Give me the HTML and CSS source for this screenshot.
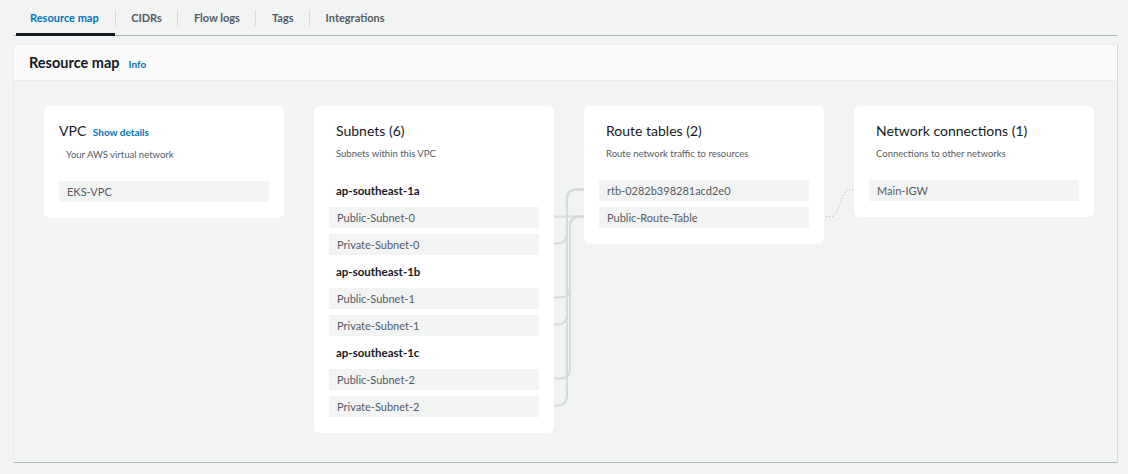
FILE: index.html
```html
<!DOCTYPE html>
<html lang="en">
<head>
<meta charset="utf-8">
<title>Resource map</title>
<link rel="stylesheet" href="styles.css">
</head>
<body>
<div class="page">
  <nav class="tabs">
    <a class="tab active">Resource map</a>
    <span class="sep"></span>
    <a class="tab">CIDRs</a>
    <span class="sep"></span>
    <a class="tab">Flow logs</a>
    <span class="sep"></span>
    <a class="tab">Tags</a>
    <span class="sep"></span>
    <a class="tab">Integrations</a>
  </nav>

  <section class="container">
    <header class="container-head">
      <h2 class="container-title">Resource map</h2>
      <a class="info">Info</a>
    </header>
    <div class="map">
      <svg class="links" width="1101" height="380" aria-hidden="true">
        <g transform="translate(-15,-82)" fill="none">
          <g stroke="#d5dbdb" stroke-width="2">
            <path d="M539 244.5 H558 Q568 244.5 568 234.5 V200.5 Q568 190.5 578 190.5 H599"/>
            <path d="M539 325.5 H558 Q568 325.5 568 315.5 V200.5 Q568 190.5 578 190.5 H599"/>
            <path d="M539 406.5 H558 Q568 406.5 568 396.5 V200.5 Q568 190.5 578 190.5 H599"/>
            <path d="M539 217.5 H599"/>
            <path d="M539 298.5 H561 Q571 298.5 571 288.5 V227.5 Q571 217.5 581 217.5 H599"/>
            <path d="M539 379.5 H561 Q571 379.5 571 369.5 V227.5 Q571 217.5 581 217.5 H599"/>
          </g>
          <path d="M809 217.5 H832 C842 217.5 840 190.5 852 190.5 H869" stroke="#aab7b8" stroke-width="1" stroke-dasharray="1 2"/>
        </g>
      </svg>

      <div class="card">
        <div class="card-head">
          <div class="card-title flush">VPC <a class="link">Show details</a></div>
          <div class="card-sub">Your AWS virtual network</div>
        </div>
        <div class="rows">
          <div class="row">EKS-VPC</div>
        </div>
      </div>

      <div class="card">
        <div class="card-head">
          <div class="card-title">Subnets (6)</div>
          <div class="card-sub">Subnets within this VPC</div>
        </div>
        <div class="rows">
          <div class="zone">ap-southeast-1a</div>
          <div class="row">Public-Subnet-0</div>
          <div class="row">Private-Subnet-0</div>
          <div class="zone">ap-southeast-1b</div>
          <div class="row">Public-Subnet-1</div>
          <div class="row">Private-Subnet-1</div>
          <div class="zone">ap-southeast-1c</div>
          <div class="row">Public-Subnet-2</div>
          <div class="row">Private-Subnet-2</div>
        </div>
      </div>

      <div class="card">
        <div class="card-head">
          <div class="card-title">Route tables (2)</div>
          <div class="card-sub">Route network traffic to resources</div>
        </div>
        <div class="rows">
          <div class="row">rtb-0282b398281acd2e0</div>
          <div class="row">Public-Route-Table</div>
        </div>
      </div>

      <div class="card">
        <div class="card-head">
          <div class="card-title">Network connections (1)</div>
          <div class="card-sub">Connections to other networks</div>
        </div>
        <div class="rows">
          <div class="row">Main-IGW</div>
        </div>
      </div>
    </div>
  </section>
</div>
</body>
</html>
```

FILE: styles.css
```css
* { box-sizing: border-box; }

html, body {
  margin: 0;
  padding: 0;
  background: #f2f3f3;
  font-family: Lato, "Open Sans", "Liberation Sans", sans-serif;
  color: #16191f;
}

.page {
  padding: 0 11px 0 14px;
}

/* Tabs */
.tabs {
  display: flex;
  align-items: center;
  height: 36px;
  padding-left: 2px;
  border-bottom: 1px solid #aab7b8;
}

.tab {
  display: flex;
  align-items: center;
  height: 36px;
  padding: 2px 15.5px 0;
  margin-bottom: -1px;
  font-size: 11px;
  font-weight: 700;
  color: #545b64;
  border-bottom: 3px solid transparent;
  cursor: pointer;
}

.tab.active {
  padding-left: 14px;
  padding-right: 16px;
  color: #0073bb;
  border-bottom-color: #16191f;
}

.sep {
  width: 1px;
  height: 16px;
  background: #d5dbdb;
  flex: none;
}

/* Container */
.container {
  margin-top: 8px;
  background: #f2f3f3;
  border-top: 1px solid #eaeded;
  border-bottom: 1px solid #aab7b8;
  box-shadow: 1px 0 0 0 #d5dbdb, -1px 0 0 0 #eaeded;
}

.container-head {
  display: flex;
  align-items: baseline;
  gap: 9px;
  height: 36px;
  padding: 9px 15px 0;
  background: #fafafa;
  border-bottom: 1px solid #eaeded;
}

.container-title {
  margin: 0;
  font-size: 14.5px;
  font-weight: 700;
  line-height: 18px;
  color: #16191f;
}

.info {
  font-size: 10px;
  font-weight: 700;
  color: #0073bb;
}

.map {
  position: relative;
  display: flex;
  align-items: flex-start;
  gap: 30px;
  padding: 25px 0 29px 30px;
}

.links {
  position: absolute;
  display: block;
  left: 0;
  top: 0;
  pointer-events: none;
}

/* Cards */
.card {
  position: relative;
  width: 240px;
  flex: none;
  background: #ffffff;
  border-radius: 6px;
  padding: 15px 15px 16px;
}

.card-head {
  padding-left: 7px;
}

.card-title {
  font-size: 14px;
  line-height: 20px;
  color: #16191f;
  white-space: nowrap;
}

.card-title.flush {
  margin-left: -7px;
}

.link {
  margin-left: 3px;
  font-size: 10px;
  font-weight: 700;
  color: #0073bb;
}

.card-sub {
  margin-top: 6px;
  font-size: 9.5px;
  line-height: 14px;
  color: #545b64;
}

.rows {
  display: flex;
  flex-direction: column;
  gap: 6px;
  margin-top: 19px;
}

.row {
  position: relative;
  height: 21px;
  line-height: 21px;
  padding: 0 8px;
  font-size: 11px;
  color: #545b64;
  background: #f2f3f3;
  white-space: nowrap;
}

.zone {
  height: 21px;
  line-height: 21px;
  padding-left: 7px;
  font-size: 11.5px;
  font-weight: 700;
  color: #16191f;
}
```
